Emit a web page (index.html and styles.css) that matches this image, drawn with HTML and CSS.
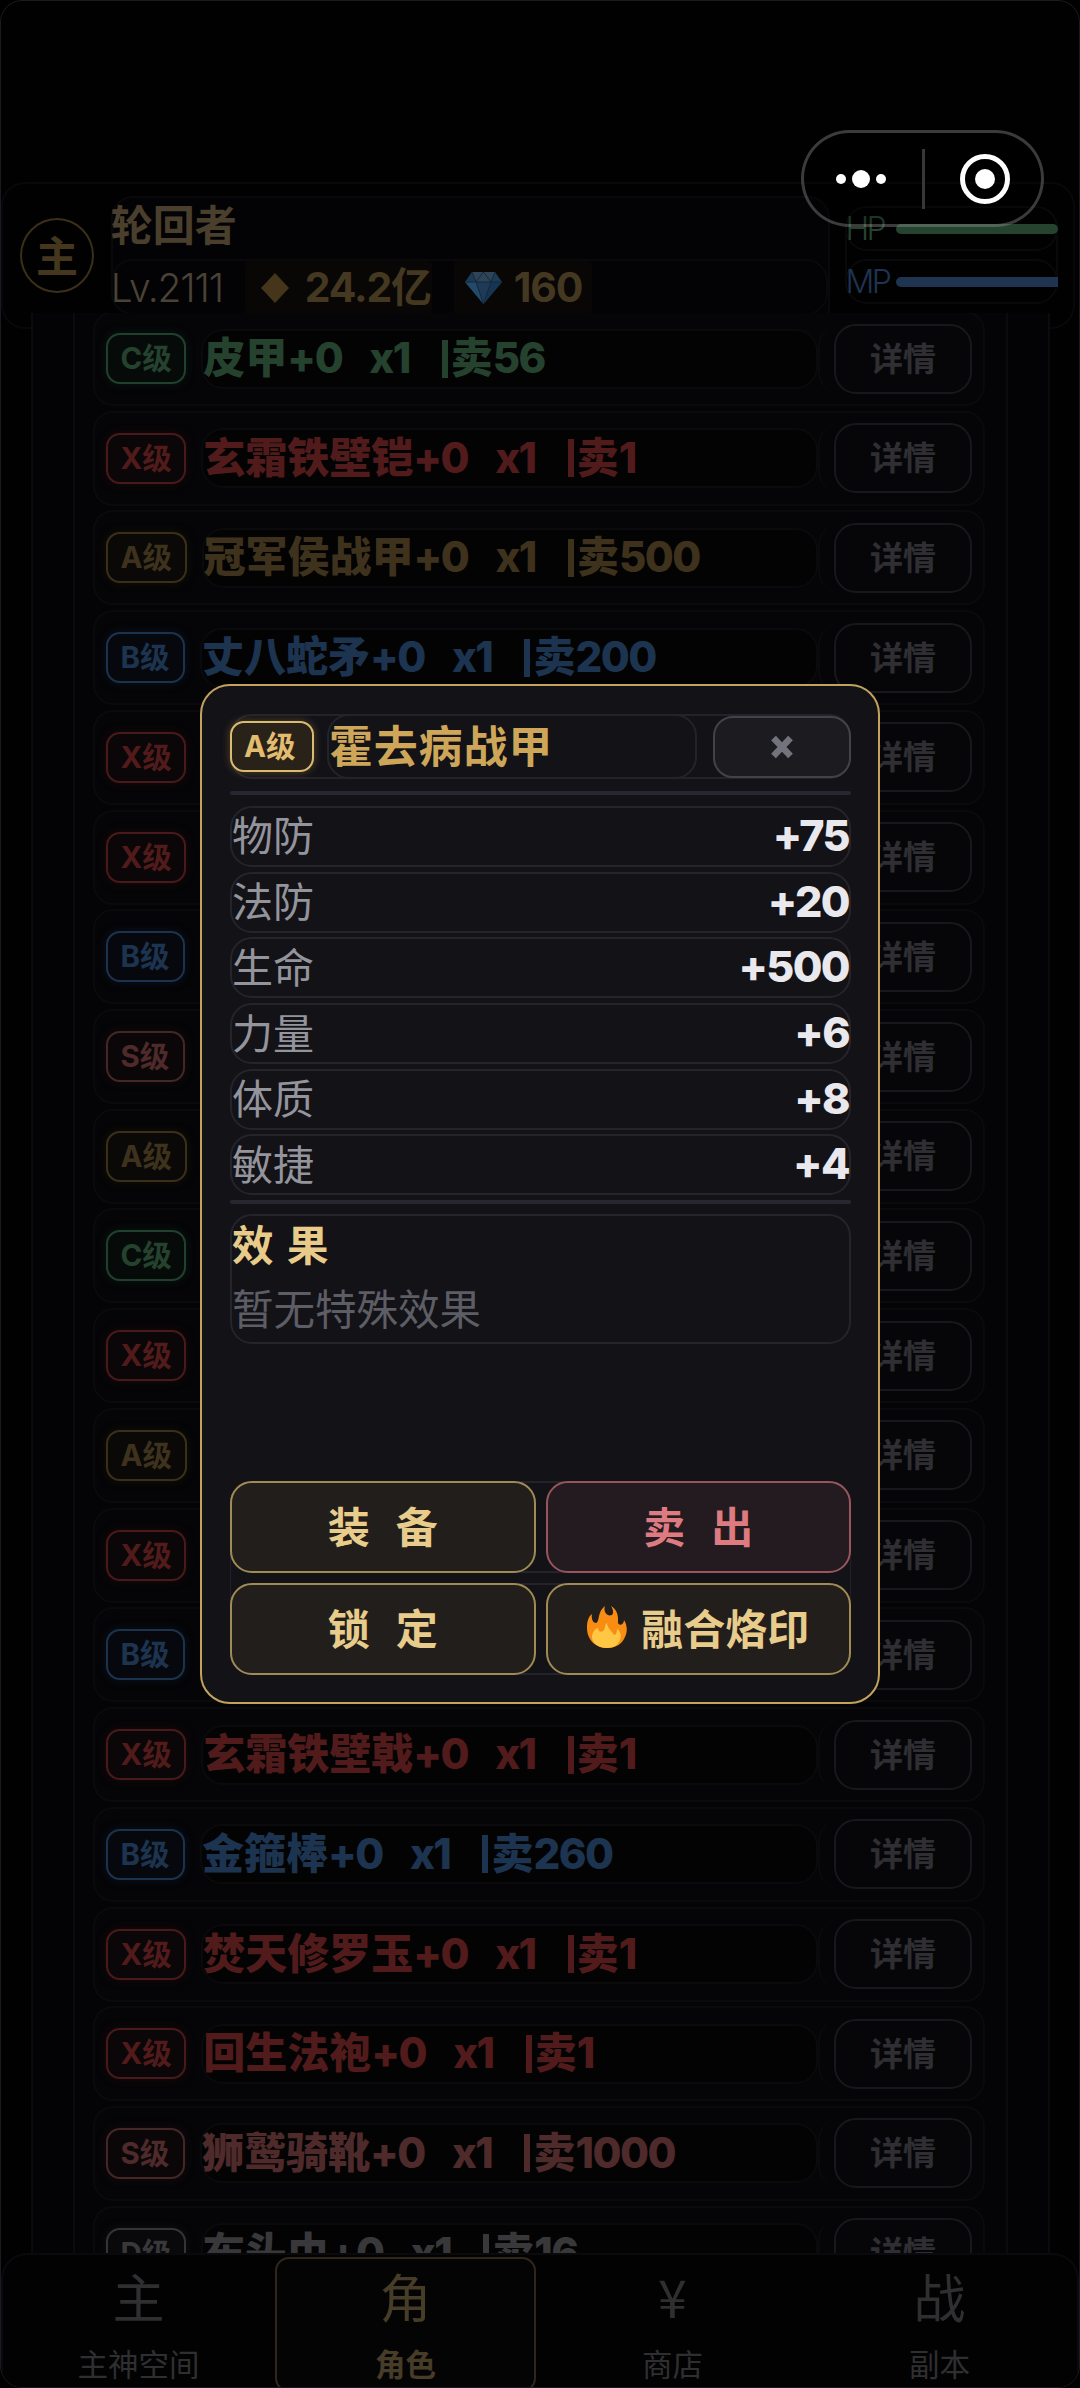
FILE: index.html
```html
<!DOCTYPE html>
<html lang="zh-CN">
<head>
<meta charset="utf-8">
<title>角色</title>
<link rel="stylesheet" href="styles.css">
</head>
<body>
<div class="app">
  <header class="top">
    <div class="avatar">主</div>
    <div class="info">
      <div class="player">轮回者</div>
      <div class="wealth">
        <span class="lv">Lv.2111</span>
        <span class="chip coins"><svg width="28" height="30" viewBox="0 0 28 30"><path d="M14 0 28 15 14 30 0 15Z" fill="#45361b"/></svg><b>24.2亿</b></span>
        <span class="chip gems"><svg width="37" height="32" viewBox="0 0 37 32"><path d="M7 0H30L37 10 18.5 32 0 10Z" fill="#1d3b57"/><path d="M7 0H30L26 10H11Z" fill="#2f4557"/><path d="M0 10H11L18.5 32Z" fill="#23496b"/><path d="M26 10H37L18.5 32Z" fill="#173551"/><path d="M7 0 11 10 18.5 0 26 10 30 0M0 10H37M11 10 18.5 32 26 10" fill="none" stroke="#13293c" stroke-width="1"/></svg><b>160</b></span>
      </div>
    </div>
    <div class="vitals">
      <div class="vital hp"><span>HP</span><i></i></div>
      <div class="vital mp"><span>MP</span><i></i></div>
    </div>
  </header>

  <main class="panel">
    <div class="list">
      <div class="row c"><span class="grade">C级</span><span class="item"><span>皮甲<em>+0</em></span><em class="qty">x1</em><span class="bar"></span><span>卖<em>56</em></span></span><span class="act"><button>详情</button></span></div>
      <div class="row x"><span class="grade">X级</span><span class="item"><span>玄霜铁壁铠<em>+0</em></span><em class="qty">x1</em><span class="bar"></span><span>卖<em>1</em></span></span><span class="act"><button>详情</button></span></div>
      <div class="row a"><span class="grade">A级</span><span class="item"><span>冠军侯战甲<em>+0</em></span><em class="qty">x1</em><span class="bar"></span><span>卖<em>500</em></span></span><span class="act"><button>详情</button></span></div>
      <div class="row b"><span class="grade">B级</span><span class="item"><span>丈八蛇矛<em>+0</em></span><em class="qty">x1</em><span class="bar"></span><span>卖<em>200</em></span></span><span class="act"><button>详情</button></span></div>
      <div class="row x"><span class="grade">X级</span><span class="item"></span><span class="act"><button>详情</button></span></div>
      <div class="row x"><span class="grade">X级</span><span class="item"></span><span class="act"><button>详情</button></span></div>
      <div class="row b"><span class="grade">B级</span><span class="item"></span><span class="act"><button>详情</button></span></div>
      <div class="row s"><span class="grade">S级</span><span class="item"></span><span class="act"><button>详情</button></span></div>
      <div class="row a"><span class="grade">A级</span><span class="item"></span><span class="act"><button>详情</button></span></div>
      <div class="row c"><span class="grade">C级</span><span class="item"></span><span class="act"><button>详情</button></span></div>
      <div class="row x"><span class="grade">X级</span><span class="item"></span><span class="act"><button>详情</button></span></div>
      <div class="row a"><span class="grade">A级</span><span class="item"></span><span class="act"><button>详情</button></span></div>
      <div class="row x"><span class="grade">X级</span><span class="item"></span><span class="act"><button>详情</button></span></div>
      <div class="row b"><span class="grade">B级</span><span class="item"></span><span class="act"><button>详情</button></span></div>
      <div class="row x"><span class="grade">X级</span><span class="item"><span>玄霜铁壁戟<em>+0</em></span><em class="qty">x1</em><span class="bar"></span><span>卖<em>1</em></span></span><span class="act"><button>详情</button></span></div>
      <div class="row b"><span class="grade">B级</span><span class="item"><span>金箍棒<em>+0</em></span><em class="qty">x1</em><span class="bar"></span><span>卖<em>260</em></span></span><span class="act"><button>详情</button></span></div>
      <div class="row x"><span class="grade">X级</span><span class="item"><span>焚天修罗玉<em>+0</em></span><em class="qty">x1</em><span class="bar"></span><span>卖<em>1</em></span></span><span class="act"><button>详情</button></span></div>
      <div class="row x"><span class="grade">X级</span><span class="item"><span>回生法袍<em>+0</em></span><em class="qty">x1</em><span class="bar"></span><span>卖<em>1</em></span></span><span class="act"><button>详情</button></span></div>
      <div class="row s"><span class="grade">S级</span><span class="item"><span>狮鹫骑靴<em>+0</em></span><em class="qty">x1</em><span class="bar"></span><span>卖<em>1000</em></span></span><span class="act"><button>详情</button></span></div>
      <div class="row d"><span class="grade">D级</span><span class="item"><span>布头巾<em>+0</em></span><em class="qty">x1</em><span class="bar"></span><span>卖<em>16</em></span></span><span class="act"><button>详情</button></span></div>
    </div>
  </main>

  <nav class="tabs">
    <div class="tab"><span class="glyph">主</span><span>主神空间</span></div>
    <div class="tab on"><span class="glyph">角</span><span>角色</span></div>
    <div class="tab"><span class="glyph">¥</span><span>商店</span></div>
    <div class="tab"><span class="glyph">战</span><span>副本</span></div>
  </nav>

  <section class="modal">
    <div class="m-head">
      <span class="grade">A级</span>
      <span class="m-title">霍去病战甲</span>
      <button class="close"><svg width="22" height="24" viewBox="0 0 22 24"><path d="M2.500 3 19.500 21M19.500 3 2.500 21" stroke="#73737d" stroke-width="6.500"/></svg></button>
    </div>
    <div class="rule"></div>
    <div class="stats">
      <div class="stat"><span>物防</span><b>+75</b></div>
      <div class="stat"><span>法防</span><b>+20</b></div>
      <div class="stat"><span>生命</span><b>+500</b></div>
      <div class="stat"><span>力量</span><b>+6</b></div>
      <div class="stat"><span>体质</span><b>+8</b></div>
      <div class="stat"><span>敏捷</span><b>+4</b></div>
    </div>
    <div class="rule second"></div>
    <div class="effect"><b>效 果</b><span>暂无特殊效果</span></div>
    <div class="actions">
      <div class="pair"><button>装<i></i>备</button><button class="sell">卖<i></i>出</button></div>
      <div class="pair"><button>锁<i></i>定</button><button><svg class="fire" width="40" height="42" viewBox="0 0 40 42"><path d="M20 42C8 42 0 33 0 22 0 16 1 11 5 8 4 13 6 17 9 17 13 16 10 6 18 0 16 6 20 11 25 9 27 7 26 3 24 0 32 5 31 12 31 17 32 20 37 19 37 14 41 20 40 27 38 31 35 38 29 42 20 42Z" fill="#f98d13"/><path d="M20 42C11 42 5 37 5 31 5 26 9 22 11 22 11 25 14 27 16 25 19 23 17 19 20 17 20 22 25 25 27 29 29 29 30 26 30 23 33 25 35 29 33 34 31 39 27 42 20 42Z" fill="#ffc744"/></svg>融合烙印</button></div>
    </div>
  </section>

  <div class="capsule">
    <svg width="50" height="20" viewBox="0 0 50 20"><g fill="#fff"><circle cx="5" cy="10" r="5"/><circle cx="25" cy="10" r="9"/><circle cx="45" cy="10" r="5"/></g></svg>
    <i></i>
    <svg width="50" height="50" viewBox="0 0 50 50"><circle cx="25" cy="25" r="22.500" fill="none" stroke="#fff" stroke-width="5"/><circle cx="25" cy="25" r="10" fill="#fff"/></svg>
  </div>
</div>
</body>
</html>
```
FILE: styles.css
```css
* { box-sizing: border-box; }
body { margin: 0; background: #000; }
button { margin: 0; padding: 0; font: inherit; color: inherit; background: none; }
em, i { font-style: normal; }
svg { display: block; flex: none; }

.app {
  position: relative;
  width: 1080px;
  height: 2388px;
  overflow: hidden;
  display: flex;
  flex-direction: column;
  padding-top: 181px;
  border: 1px solid #1a1a22;
  border-radius: 22px;
  background: #010102;
  font-family: Inter, "Noto Sans CJK SC", sans-serif;
}

/* player header */
.top {
  flex: none;
  height: 147px;
  margin: 0 4px -16px 0;
  padding: 12px 15px 0 17px;
  display: flex;
  border: 2px solid #08080b;
  border-radius: 24px;
}
.avatar {
  width: 74px;
  height: 75px;
  margin: 22px 17px 0 0;
  border: 2px solid #3b2f18;
  border-radius: 50%;
  color: #45371d;
  font: bold 42px/67px "Noto Sans CJK SC", sans-serif;
  text-align: center;
}
.info {
  width: 721px;
  height: 119px;
  border: 2px solid #09090c;
  border-radius: 22px 22px 0 22px;
  background: #030305;
}
.player {
  height: 61px;
  margin-left: -2px;
  color: #4a3f2c;
  font: bold 42px/50px "Noto Sans CJK SC", sans-serif;
}
.wealth {
  height: 56px;
  margin-left: -2px;
  display: flex;
  border: 2px solid #09090c;
  border-radius: 22px;
}
.lv {
  width: 134px;
  margin-left: -2px;
  color: #4a4235;
  font-size: 39px;
  font-weight: 300;
  line-height: 54px;
  letter-spacing: -1.2px;
}
.chip {
  display: flex;
  align-items: center;
  height: 54px;
  border-radius: 4px;
  background: #080705;
  color: #453821;
  font-size: 41px;
  line-height: 52px;
  white-space: nowrap;
}
.chip b { margin-top: -3px; letter-spacing: -1.2px; }
.coins { width: 187px; padding-left: 16px; gap: 16px; margin-right: 22px; }
.gems { width: 138px; padding-left: 11px; gap: 12px; }
.vitals {
  width: 213px;
  height: 98px;
  margin: 10px 0 0 15px;
  display: flex;
  flex-direction: column;
  justify-content: space-between;
  border: solid #09090c;
  border-width: 0 2px;
  border-radius: 22px;
}
.vital {
  height: 45px;
  margin: 0 -2px;
  display: flex;
  align-items: center;
  gap: 9px;
  border: 2px solid #09090c;
  border-radius: 22px;
  font-size: 32px;
  font-weight: 300;
}
.vital span { width: 42px; margin-left: -2px; letter-spacing: -2.6px; }
.vital i { flex: 1; height: 10px; border-radius: 5px; background: currentColor; margin-right: -2px; }
.hp { color: #25432f; }
.mp { color: #1e3450; }
.mp i { border-radius: 5px 0 0 5px; }

/* inventory */
.panel {
  flex: none;
  width: 1019px;
  height: 1940px;
  margin-left: 30px;
  padding: 0 40px;
  overflow: hidden;
  border: solid #0b0b0e;
  border-width: 0 2px;
  background: #030306;
}
.list {
  height: 100%;
  padding: 0 21px 0 18px;
  border: solid #0b0b0e;
  border-width: 0 2px;
  background: #040407;
}
.row {
  position: relative;
  top: -2px;
  height: 95px;
  margin-bottom: 4.72px;
  padding: 0 11px 0 11px;
  display: flex;
  align-items: center;
  border: 2px solid #0a0a0d;
  border-radius: 20px;
  background: #050507;
  color: var(--ink);
}
.grade {
  flex: none;
  height: 51px;
  min-width: 79px;
  padding: 0 12.500px;
  border: 2px solid var(--line);
  border-radius: 14px;
  box-shadow: 0 0 8px var(--glow);
  background: var(--tint);
  font-size: 29.500px;
  font-weight: 700;
  line-height: 47px;
  white-space: nowrap;
}
.item {
  flex: 1;
  height: 60px;
  margin-left: 15px;
  display: flex;
  align-items: center;
  border: 2px solid #0a0a0c;
  border-radius: 22px;
  background: #030304;
  font-size: 42px;
  font-weight: 800;
  line-height: 52px;
  white-space: nowrap;
}
.item > span:not(.bar), .item > em { margin-top: -1px; }
.item em { letter-spacing: -1.5px; }
.item .qty { margin-left: 27px; }
.bar { width: 6px; height: 38px; margin: 0 3px 0 32px; background: currentColor; }
.act {
  flex: none;
  width: 154px;
  padding-left: 14px;
  border-left: 2px solid #0a0a0c;
  border-radius: 22px;
}
.act button {
  display: block;
  width: 138px;
  height: 70px;
  border: 2px solid #18181c;
  border-radius: 22px;
  background: #060609;
  color: #2f2f33;
  font-size: 33px;
  font-weight: 700;
  line-height: 62px;
}
.c { --ink: #25422f; --line: #21412f; --glow: #0a1811; --tint: #060b09; }
.x { --ink: #521b1b; --line: #491a1b; --glow: #1b0909; --tint: #0b0607; }
.a { --ink: #3e321d; --line: #3a301a; --glow: #151107; --tint: #0a0907; }
.b { --ink: #1d3450; --line: #1c334d; --glow: #09121e; --tint: #06080d; }
.s { --ink: #4e2a2b; --line: #452728; --glow: #170c0c; --tint: #0b0708; }
.d { --ink: #38383b; --line: #343437; --glow: #111113; --tint: #09090b; }

/* bottom navigation */
.tabs {
  flex: none;
  height: 141px;
  padding: 2px 7px 0 5px;
  display: flex;
  gap: 6px;
  border: 2px solid #0a0a0d;
  border-radius: 26px 26px 22px 22px;
  background: #020203;
}
.tab {
  flex: 1;
  height: 135px;
  display: flex;
  flex-direction: column;
  align-items: center;
  border: 2px solid transparent;
  border-radius: 14px;
  color: #2f2f31;
  font: 400 30.500px/46px "Noto Sans CJK SC", sans-serif;
}
.glyph { height: 81px; font-size: 52px; line-height: 74px; font-weight: 400; }
.on { border-color: #30271a; background: #040405; color: #473c27; font-weight: 700; }

/* item dialog */
.modal {
  position: absolute;
  left: 199px;
  top: 683px;
  width: 680px;
  height: 1020px;
  padding: 28px 27px 27px 28px;
  display: flex;
  flex-direction: column;
  border: 2px solid #c3a25e;
  border-radius: 30px;
  background: #131217;
}
.m-head {
  flex: none;
  height: 65px;
  display: flex;
  align-items: center;
  border: 2px solid #24232a;
  border-radius: 22px;
}
.m-head .grade {
  --line: #d9bb71;
  --glow: rgba(214, 168, 75, .35);
  --tint: #282219;
  margin-left: -2px;
  width: 84px;
  padding: 0 12px;
  color: #e2bc6f;
}
.m-title {
  flex: 1;
  height: 65px;
  margin: 0 16px 0 13px;
  border: 2px solid #24232a;
  border-radius: 22px;
  color: #cda659;
  font: bold 44px/57px "Noto Sans CJK SC", sans-serif;
  letter-spacing: .8px;
}
.close {
  width: 138px;
  height: 62px;
  margin-right: -2px;
  display: flex;
  align-items: center;
  justify-content: center;
  border: 2px solid #42424a;
  border-radius: 20px;
  background: #1b1b20;
}
.rule { flex: none; height: 4px; margin: 12px 0 11px; border-radius: 2px; background: #282731; }
.rule.second { margin: 5px 0 10px; }
.stats { display: flex; flex-direction: column; gap: 4.800px; }
.stat {
  height: 60.900px;
  display: flex;
  align-items: center;
  justify-content: space-between;
  border: 2px solid #25242b;
  border-radius: 22px;
  color: #94949c;
  font: 400 41px/52px "Noto Sans CJK SC", sans-serif;
}
.stat span { margin-top: -6px; }
.stat b { margin-top: -3px; color: #e9e8ec; font: 800 43px/52px Inter, sans-serif; letter-spacing: -1.600px; }
.effect {
  height: 130px;
  display: flex;
  flex-direction: column;
  border: 2px solid #25242b;
  border-radius: 22px;
  color: #5d5d65;
  font: 400 41.500px/69px "Noto Sans CJK SC", sans-serif;
}
.effect b { height: 64px; color: #e8cb89; line-height: 54px; font-weight: 700; word-spacing: 4px; }
.actions { margin-top: auto; display: flex; flex-direction: column; gap: 10px; border: solid #201f2a; border-width: 0 1px; border-radius: 22px; }
.pair { display: flex; gap: 10px; margin: 0 -1px; border-radius: 22px; box-shadow: inset 0 2px #24232a, inset 0 -2px #24232a; }
.pair button {
  flex: 1;
  height: 92px;
  padding-bottom: 4px;
  display: flex;
  align-items: center;
  justify-content: center;
  border: 2px solid #a18b55;
  border-radius: 22px;
  background: #221e1b;
  color: #e7cc8c;
  font: bold 42px/60px "Noto Sans CJK SC", sans-serif;
}
.pair button i { width: 26px; }
.pair .sell { border-color: #985560; background: #231b20; color: #de7b80; }
.fire { margin-right: 14px; }

/* host app menu */
.capsule {
  position: absolute;
  left: 800px;
  top: 129px;
  width: 243px;
  height: 97px;
  padding: 0 31px 0 32px;
  display: flex;
  align-items: center;
  justify-content: space-between;
  border: 3px solid rgba(255, 255, 255, .23);
  border-radius: 49px;
  background: rgba(0, 0, 0, .2);
}
.capsule i { width: 3px; height: 60px; background: #373737; }
```
